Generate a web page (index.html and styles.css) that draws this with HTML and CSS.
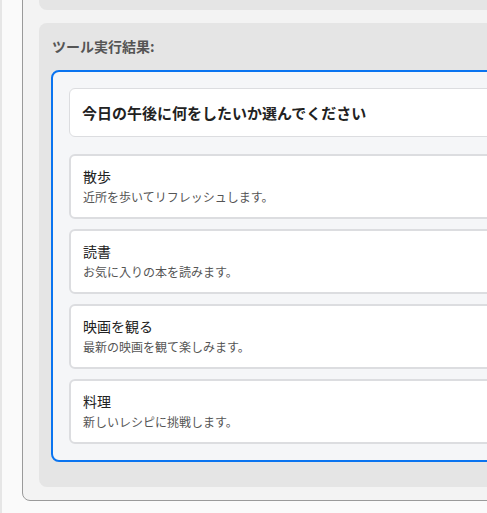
FILE: index.html
```html
<!DOCTYPE html>
<html lang="ja">
<head>
<meta charset="utf-8">
<title>ツール実行結果</title>
<link rel="stylesheet" href="styles.css">
</head>
<body>
<div class="page">
  <div class="panel">
    <div class="prev"></div>
    <div class="result">
      <div class="label">ツール実行結果:</div>
      <div class="box">
        <div class="title-card">今日の午後に何をしたいか選んでください</div>
        <div class="items">
          <div class="item">
            <div class="item-title">散歩</div>
            <div class="item-desc">近所を歩いてリフレッシュします。</div>
          </div>
          <div class="item">
            <div class="item-title">読書</div>
            <div class="item-desc">お気に入りの本を読みます。</div>
          </div>
          <div class="item">
            <div class="item-title">映画を観る</div>
            <div class="item-desc">最新の映画を観て楽しみます。</div>
          </div>
          <div class="item">
            <div class="item-title">料理</div>
            <div class="item-desc">新しいレシピに挑戦します。</div>
          </div>
        </div>
      </div>
    </div>
  </div>
</div>
</body>
</html>
```
FILE: styles.css
```css
html, body {
  margin: 0;
  padding: 0;
  background: #fafafa;
  overflow: hidden;
  font-family: "Noto Sans CJK JP", "Noto Sans", sans-serif;
}
.page {
  border-left: 2px solid #e6e6e6;
  padding-left: 20px;
  height: 513px;
  overflow: hidden;
}
.panel {
  margin-top: -30px;
  width: 700px;
  border: 1px solid #9a9a9a;
  border-radius: 8px;
  background: #f3f3f3;
  padding: 0 16px 13px 16px;
}
.prev {
  height: 39px;
  background: #e5e5e5;
  border-radius: 8px;
  margin-bottom: 13px;
}
.result {
  background: #e5e5e5;
  border-radius: 8px;
  padding: 12px 12px 25px 12px;
}
.label {
  font-size: 14px;
  font-weight: bold;
  color: #555;
  line-height: 22px;
  margin-bottom: 13px;
  padding-left: 1px;
}
.box {
  border: 2px solid #0a74f0;
  border-radius: 8px;
  background: #f5f6f8;
  padding: 16px;
}
.title-card {
  background: #fff;
  border: 1px solid #dcdde0;
  border-radius: 6px;
  padding: 13px 12px;
  font-size: 15px;
  font-weight: bold;
  line-height: 21px;
  color: #222;
  margin-bottom: 17px;
}
.items {
  display: flex;
  flex-direction: column;
  gap: 10px;
}
.item {
  background: #fff;
  border: 2px solid #dcdde0;
  border-radius: 6px;
  padding: 10px 12px 11px 12px;
}
.item-title {
  font-size: 14px;
  line-height: 20px;
  color: #222;
  margin-bottom: 2px;
}
.item-desc {
  font-size: 12px;
  line-height: 18px;
  color: #555;
}
```
